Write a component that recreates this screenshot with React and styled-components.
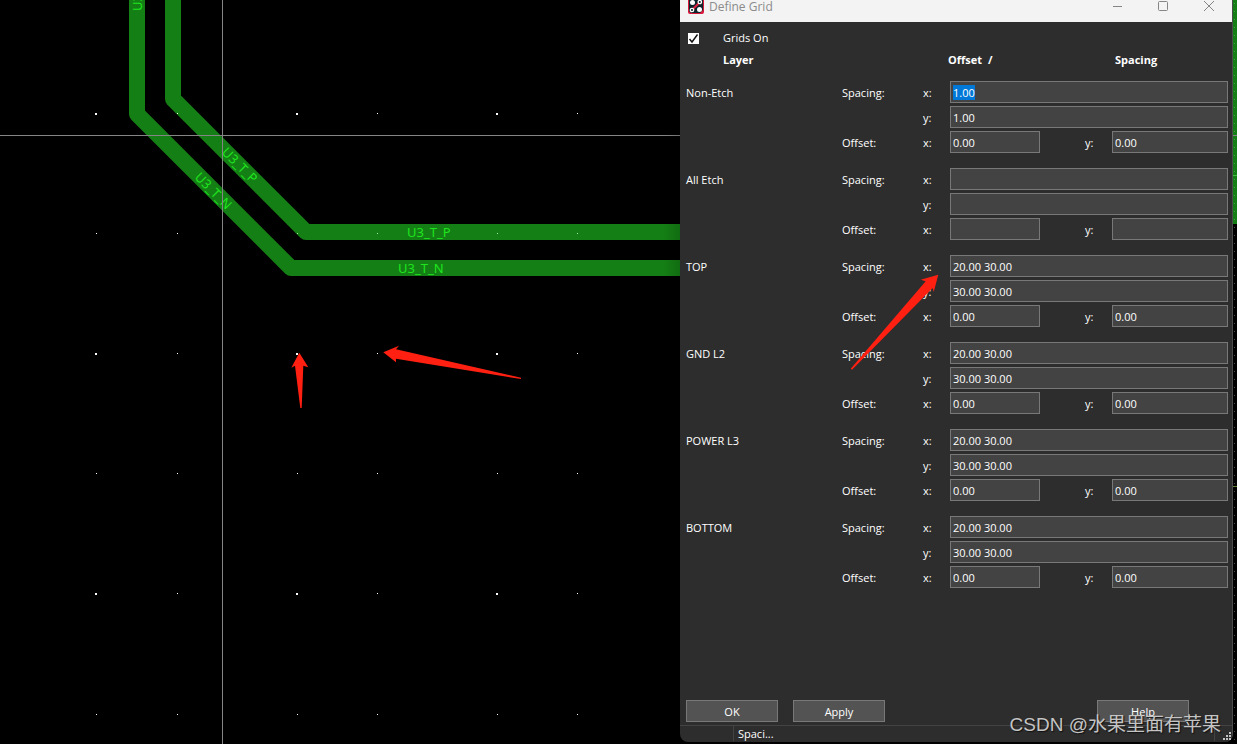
import { useEffect, useRef } from "react";
import styled, { createGlobalStyle } from "styled-components";

const GlobalStyle = createGlobalStyle`
  * {
    box-sizing: border-box;
  }
  body {
    margin: 0;
    background-color: #000;
    color: #fff;
    font-family: "Open Sans", "Noto Sans", sans-serif;
    font-size: 11px;
    line-height: 16px;
  }
`;

const Workspace = styled.main`
  display: grid;
  grid-template-columns: minmax(0, 1fr) 553px 4px;
  min-height: 100vh;
  position: relative;
`;

const Board = styled.svg`
  display: block;
  width: 100%;
  height: 100%;
  background-color: #000;
`;

const Trace = styled.path`
  fill: none;
  stroke: #147f14;
  stroke-width: 16px;
  stroke-linejoin: round;
`;

const NetName = styled.text`
  fill: #1fe41f;
  font-family: "Noto Sans", sans-serif;
  font-size: 13px;
`;

const Crosshair = styled.line`
  stroke: #858585;
  stroke-width: 1px;
  shape-rendering: crispEdges;
`;

const Dialog = styled.section`
  display: flex;
  flex-direction: column;
  position: relative;
  margin-bottom: 2px;
  border-right: 1px solid #4b4b4b;
  border-radius: 0 0 8px 8px;
  background-color: #2d2d2d;
`;

const TitleBar = styled.header`
  display: flex;
  align-items: center;
  height: 22px;
  padding: 0 0 10px 8px;
  overflow: hidden;
  background-color: #f3f3f3;
  color: #8b8b8b;
`;

const AppIcon = styled.svg`
  flex: none;
  width: 16px;
  height: 16px;
`;

const Title = styled.h1`
  flex: 1;
  margin: 0;
  padding: 2px 0 0 5px;
  font-size: 12px;
  font-weight: 400;
`;

const WindowButton = styled.button`
  display: flex;
  align-items: center;
  justify-content: center;
  width: 46px;
  height: 32px;
  padding: 0;
  border: 0;
  background: none;
  color: #858585;
`;

const GridForm = styled.form`
  display: flex;
  flex: 1;
  flex-direction: column;
  padding-top: 5px;
`;

const ToggleRow = styled.label`
  display: flex;
  align-items: center;
  gap: 24px;
  height: 22px;
  padding-left: 8px;
`;

const CheckWrap = styled.span`
  display: block;
  position: relative;
  width: 11px;
  height: 11px;
`;

const CheckBox = styled.input`
  display: block;
  appearance: none;
  width: 11px;
  height: 11px;
  margin: 0;
  background-color: #fff;

  &:not(:checked) + svg {
    display: none;
  }
`;

const CheckMark = styled.svg`
  position: absolute;
  inset: 0;
  pointer-events: none;
`;

const Headings = styled.div`
  display: grid;
  grid-template-columns: 225px 40px 127px 1fr;
  align-items: center;
  height: 22px;
  margin-bottom: 10px;
  padding-left: 43px;
  font-weight: 700;
`;

const Layers = styled.div`
  display: flex;
  flex-direction: column;
  gap: 15px;
  padding: 0 4px 0 6px;
`;

const LayerGroup = styled.div`
  display: grid;
  grid-template-columns: 156px 81px 27px 90px 72px 1fr;
  grid-auto-rows: 22px;
  row-gap: 3px;
  align-items: center;
`;

const Caption = styled.span`
  grid-column: ${(props) => props.$column};
  padding-top: 2px;
`;

const AxisLabel = styled.label`
  grid-column: ${(props) => props.$column};
  padding-top: 2px;
  padding-left: ${(props) => (props.$column === 5 ? "45px" : "0")};
`;

const Field = styled.input`
  grid-column: ${(props) => (props.$wide ? "4 / 7" : "auto")};
  width: 100%;
  height: 22px;
  padding: 1px 2px 0;
  border: 1px solid #787878;
  border-radius: 0;
  outline: none;
  background-color: #434343;
  color: #fff;
  font: inherit;

  &::selection {
    background-color: #0078d7;
    color: #fff;
  }
`;

const Actions = styled.div`
  display: flex;
  gap: 15px;
  margin-top: auto;
  padding: 0 43px 3px 6px;
`;

const ActionButton = styled.button`
  width: 92px;
  height: 22px;
  margin-left: ${(props) => (props.$end ? "auto" : "0")};
  padding: 2px 0 0;
  border: 1px solid #787878;
  background-color: #535353;
  color: #fff;
  font: inherit;
  line-height: 18px;
`;

const StatusBar = styled.footer`
  display: grid;
  grid-template-columns: 53px 1fr 18px;
  height: 17px;
  border-top: 1px solid #434343;
`;

const StatusCell = styled.div`
  height: 15px;
  padding-left: 4px;
  border-left: ${(props) => (props.$divided ? "1px solid #434343" : "0")};
`;

const Grip = styled.svg`
  display: block;
  margin: 6px 0 0 4px;
`;

const Overlay = styled.svg`
  position: absolute;
  top: 0;
  left: 0;
  width: 100%;
  height: 100%;
  pointer-events: none;
`;

const Arrow = styled.polygon`
  fill: #ff2012;
`;

const Watermark = styled.div`
  position: absolute;
  right: 16px;
  bottom: 5px;
  color: #c4c4c4;
  font-family: "Liberation Sans", "Noto Sans CJK SC", sans-serif;
  font-size: 19px;
  line-height: 28px;
  text-shadow: 1px 1px 1px #111;
  pointer-events: none;
`;

const dotColumns = [95, 177, 296, 377, 496, 577];
const dotRows = [113, 233, 353, 473, 593, 714];

const layers = [
  { name: "Non-Etch", x: "1.00", y: "1.00", offset: "0.00" },
  { name: "All Etch", x: "", y: "", offset: "" },
  { name: "TOP", x: "20.00 30.00", y: "30.00 30.00", offset: "0.00" },
  { name: "GND L2", x: "20.00 30.00", y: "30.00 30.00", offset: "0.00" },
  { name: "POWER L3", x: "20.00 30.00", y: "30.00 30.00", offset: "0.00" },
  { name: "BOTTOM", x: "20.00 30.00", y: "30.00 30.00", offset: "0.00" },
];

const BoardView = () => (
  <Board>
    <defs>
      <linearGradient id="edge">
        <stop offset="0" stopColor="#000" stopOpacity="0" />
        <stop offset="1" stopColor="#000" stopOpacity="0.15" />
      </linearGradient>
    </defs>
    <Trace d="M137 -20V114L291 268H4000" />
    <Trace d="M173 -20V99L306 232H4000" />
    {dotRows.map((y, row) =>
      dotColumns.map((x, column) => {
        const size = row % 2 === 0 && row < 5 && column % 2 === 0 ? 2 : 1;
        return (
          <rect
            key={`${x}-${y}`}
            x={size === 1 && column % 2 === 0 ? x + 1 : x}
            y={y}
            width={size}
            height={size}
            fill={row === 1 && column > 1 ? "#a5e8a5" : "#fff"}
          />
        );
      })
    )}
    <NetName x="407" y="237">U3_T_P</NetName>
    <NetName x="398" y="273">U3_T_N</NetName>
    <NetName transform="translate(221 153) rotate(45)">U3_T_P</NetName>
    <NetName transform="translate(194 178) rotate(45)">U3_T_N</NetName>
    <NetName transform="translate(142 11) rotate(-90)">U3_T_N</NetName>
    <NetName transform="translate(178 1) rotate(-90)">U3_T_P</NetName>
    <Crosshair x1="0" y1="135.5" x2="100%" y2="135.5" />
    <Crosshair x1="222.5" y1="0" x2="222.5" y2="100%" />
    <svg x="100%" overflow="visible">
      <rect x="-16" width="16" height="100%" fill="url(#edge)" />
    </svg>
    <Arrow points="299.3,352.7 291.3,367.7 295,365.7 300.3,408 301.7,408 303.3,365.7 308.3,367.3" />
    <Arrow points="383.3,352.3 399,345.7 396,349.3 521,377.7 521,379 396,358.7 396,362.3" />
  </Board>
);

const BoardEdge = () => (
  <Board>
    <defs>
      <pattern id="ticks" width="4" height="8" patternUnits="userSpaceOnUse">
        <rect x="1" y="3" width="1" height="1" fill="#4f9a4f" />
      </pattern>
      <pattern id="dim-ticks" width="4" height="8" patternUnits="userSpaceOnUse">
        <rect x="1" y="3" width="1" height="1" fill="#4a4a4a" />
      </pattern>
    </defs>
    <rect width="4" height="100%" fill="url(#dim-ticks)" />
    <rect width="4" height="224" fill="#147f14" />
    <rect width="4" height="224" fill="url(#ticks)" />
    <rect y="135" width="4" height="1" fill="#858585" />
    <rect y="175" width="4" height="1" fill="#3fbf3f" />
    <rect y="486" width="4" height="1" fill="#63833a" />
  </Board>
);

const Layer = ({ name, x, y, offset, firstRef }) => {
  const id = name.toLowerCase().replace(" ", "-");
  return (
    <LayerGroup role="group" aria-label={name}>
      <Caption $column={1}>{name}</Caption>
      <Caption $column={2}>Spacing:</Caption>
      <AxisLabel $column={3} htmlFor={`${id}-sx`}>x:</AxisLabel>
      <Field $wide id={`${id}-sx`} defaultValue={x} ref={firstRef} />
      <AxisLabel $column={3} htmlFor={`${id}-sy`}>y:</AxisLabel>
      <Field $wide id={`${id}-sy`} defaultValue={y} />
      <Caption $column={2}>Offset:</Caption>
      <AxisLabel $column={3} htmlFor={`${id}-ox`}>x:</AxisLabel>
      <Field id={`${id}-ox`} defaultValue={offset} />
      <AxisLabel $column={5} htmlFor={`${id}-oy`}>y:</AxisLabel>
      <Field id={`${id}-oy`} defaultValue={offset} />
    </LayerGroup>
  );
};

const DefineGrid = () => {
  const firstField = useRef(null);
  useEffect(() => {
    firstField.current.focus();
    firstField.current.select();
  }, []);
  return (
    <Dialog>
      <TitleBar>
        <AppIcon viewBox="0 0 16 16">
          <rect width="16" height="16" rx="2" fill="#d9173a" />
          <path d="M1 1H14L15 2V12L12 15H3L1 13Z" fill="#10242c" />
          <path d="M4 12L12 4" stroke="#e0203f" strokeWidth="2" />
          <circle cx="4.5" cy="4.5" r="2.5" fill="#fff" />
          <circle cx="11.5" cy="11.5" r="2.5" fill="#fff" />
          <circle cx="11.8" cy="4" r="1.7" fill="#10242c" stroke="#fff" strokeWidth="1.3" />
          <circle cx="4" cy="12" r="1.7" fill="#10242c" stroke="#fff" strokeWidth="1.3" />
        </AppIcon>
        <Title>Define Grid</Title>
        <WindowButton aria-label="Minimize">
          <svg width="10" height="10" fill="none" stroke="currentColor">
            <path d="M1 5.5H11" />
          </svg>
        </WindowButton>
        <WindowButton aria-label="Maximize">
          <svg width="10" height="10" fill="none" stroke="currentColor">
            <rect x="0.5" y="0.5" width="9" height="9" rx="1" />
          </svg>
        </WindowButton>
        <WindowButton aria-label="Close">
          <svg width="10" height="10" fill="none" stroke="currentColor">
            <path d="M0 0L10 10M10 0L0 10" />
          </svg>
        </WindowButton>
      </TitleBar>
      <GridForm onSubmit={(e) => e.preventDefault()}>
        <ToggleRow>
          <CheckWrap>
            <CheckBox type="checkbox" defaultChecked />
            <CheckMark width="11" height="11" fill="none" stroke="#111" strokeWidth="1.4">
              <path d="M1.5 6L4 9L9.5 1.5" />
            </CheckMark>
          </CheckWrap>
          Grids On
        </ToggleRow>
        <Headings>
          <span>Layer</span>
          <span>Offset</span>
          <span>/</span>
          <span>Spacing</span>
        </Headings>
        <Layers>
          {layers.map((layer, index) => (
            <Layer
              key={layer.name}
              {...layer}
              firstRef={index === 0 ? firstField : undefined}
            />
          ))}
        </Layers>
        <Actions>
          <ActionButton type="submit">OK</ActionButton>
          <ActionButton type="button">Apply</ActionButton>
          <ActionButton type="button" $end>Help</ActionButton>
        </Actions>
      </GridForm>
      <StatusBar>
        <StatusCell />
        <StatusCell $divided>Spaci...</StatusCell>
        <StatusCell $divided>
          <Grip width="9" height="9" fill="#c4c4c4">
            <path d="M6 0h2v2h-2zM3 3h2v2h-2zM6 3h2v2h-2zM0 6h2v2h-2zM3 6h2v2h-2zM6 6h2v2h-2z" />
          </Grip>
        </StatusCell>
      </StatusBar>
      <Overlay>
        <Arrow points="258.3,274.7 240.7,279.7 245.7,281.3 170.7,368.7 172,369.7 252.7,288 253.7,292" />
      </Overlay>
    </Dialog>
  );
};

const App = () => (
  <>
    <GlobalStyle />
    <Workspace>
      <BoardView />
      <DefineGrid />
      <BoardEdge />
      <Watermark>CSDN @水果里面有苹果</Watermark>
    </Workspace>
  </>
);

export default App;
